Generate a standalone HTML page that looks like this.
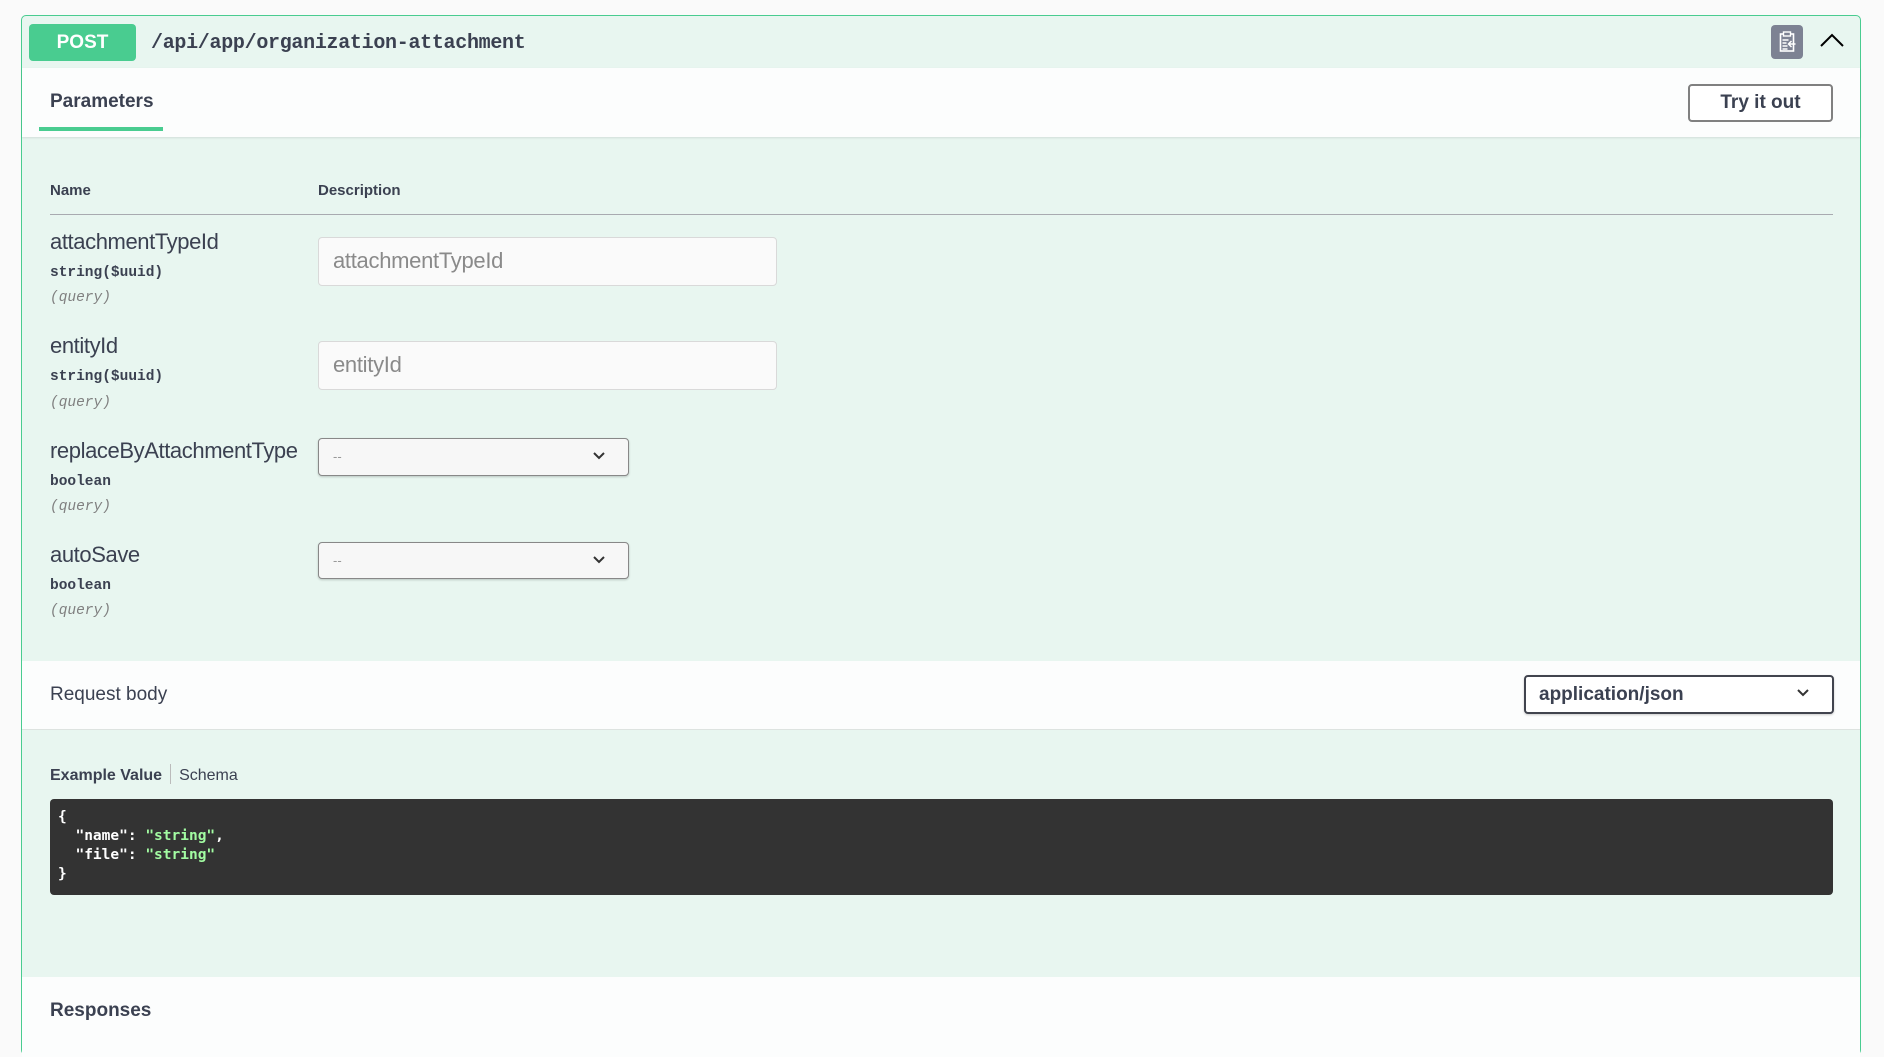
<!DOCTYPE html>
<html><head><style>
body{margin:0;background:#fafafa;font-family:"Liberation Sans",sans-serif;color:#3b4151;width:1884px;height:1037px;overflow:hidden;position:relative}
.box{position:absolute;left:21px;top:15px;width:1840px;height:1040px;border:1px solid #49cc90;border-radius:5px;background:#e8f6f0;box-sizing:border-box}
.a{position:absolute}
.hdr{left:0;top:0;width:100%;height:52px;border-bottom:1px solid #49cc90}
.badge{left:7px;top:8px;width:107px;height:37px;background:#49cc90;border-radius:4px;color:#fff;font-weight:bold;font-size:19px;text-align:center;line-height:37px}
.path{left:129px;top:11px;font-family:"Liberation Mono",monospace;font-size:20px;line-height:34px;color:#3b4151;font-weight:bold;letter-spacing:-0.3px}
.white{left:0;width:100%;background:#fcfdfd}
.lbl{font-size:22px;color:#3b4151;letter-spacing:-0.4px}
.type{font-family:"Liberation Mono",monospace;font-size:14.5px;font-weight:bold}
.q{font-family:"Liberation Mono",monospace;font-size:14.5px;font-style:italic;color:#808080}
.inp{background:#fafafa;border:1px solid #d9d9d9;border-radius:4px;box-sizing:border-box;font-size:22px;color:#8a8a8a;padding-left:14px;line-height:46px;letter-spacing:-0.3px}
.sel{background:#f7f7f7;border:1px solid #888;border-radius:4px;box-sizing:border-box;box-shadow:0 1px 2px rgba(0,0,0,.2);font-size:13px;color:#999;padding-left:14px}
</style></head><body>
<div class="box">
 <div class="a hdr"></div>
 <div class="a badge">POST</div>
 <div class="a path">/api/app/organization-attachment</div>
 <div class="a" style="left:1749px;top:9px;width:32px;height:34px;background:#7d8293;border-radius:4px">
  <svg width="32" height="34" viewBox="0 0 31 34"><rect x="9" y="9" width="13" height="17" fill="none" stroke="#fff" stroke-width="1.6"/><rect x="12" y="7" width="7" height="4" fill="#7d8293" stroke="#fff" stroke-width="1.4"/><path d="M11 15h6M11 18h4M11 21h5M11 24h5M24 19h-6M20 16l-3 3 3 3" stroke="#fff" stroke-width="1.5" fill="none"/></svg>
 </div>
 <svg class="a" style="left:1797px;top:15px" width="26" height="20" viewBox="0 0 26 20"><path d="M2 15L13 4l11 11" stroke="#000" stroke-width="2" fill="none"/></svg>
 <div class="a white" style="top:52px;height:69px;box-shadow:0 1px 2px rgba(0,0,0,.1)"></div>
 <div class="a" style="left:28px;top:75px;font-size:19px;font-weight:bold">Parameters</div>
 <div class="a" style="left:17px;top:111px;width:124px;height:4px;background:#49cc90"></div>
 <div class="a" style="left:1666px;top:68px;width:145px;height:38px;border:2px solid #808080;border-radius:4px;box-sizing:border-box;background:#fff;font-size:19px;font-weight:bold;text-align:center;line-height:34px">Try it out</div>
 <div class="a" style="left:28px;top:166px;font-size:15px;font-weight:bold">Name</div>
 <div class="a" style="left:296px;top:166px;font-size:15px;font-weight:bold">Description</div>
 <div class="a" style="left:28px;top:198px;width:1783px;height:1px;background:#a8aab0"></div>

 <div class="a lbl" style="left:28px;top:213px">attachmentTypeId</div>
 <div class="a type" style="left:28px;top:249px">string($uuid)</div>
 <div class="a q" style="left:28px;top:274px">(query)</div>
 <div class="a inp" style="left:296px;top:221px;width:459px;height:49px">attachmentTypeId</div>

 <div class="a lbl" style="left:28px;top:317px">entityId</div>
 <div class="a type" style="left:28px;top:353px">string($uuid)</div>
 <div class="a q" style="left:28px;top:379px">(query)</div>
 <div class="a inp" style="left:296px;top:325px;width:459px;height:49px">entityId</div>

 <div class="a lbl" style="left:28px;top:422px">replaceByAttachmentType</div>
 <div class="a type" style="left:28px;top:458px">boolean</div>
 <div class="a q" style="left:28px;top:483px">(query)</div>
 <div class="a sel" style="left:296px;top:422px;width:311px;height:38px;line-height:36px">--</div>
 <svg class="a" style="left:570px;top:435px" width="14" height="10"><path d="M2 2l5 5 5-5" stroke="#333" stroke-width="2" fill="none"/></svg>

 <div class="a lbl" style="left:28px;top:526px">autoSave</div>
 <div class="a type" style="left:28px;top:562px">boolean</div>
 <div class="a q" style="left:28px;top:587px">(query)</div>
 <div class="a sel" style="left:296px;top:526px;width:311px;height:37px;line-height:35px">--</div>
 <svg class="a" style="left:570px;top:539px" width="14" height="10"><path d="M2 2l5 5 5-5" stroke="#333" stroke-width="2" fill="none"/></svg>

 <div class="a white" style="top:645px;height:68px;border-bottom:1px solid #dde3e0"></div>
 <div class="a" style="left:28px;top:668px;font-size:19px">Request body</div>
 <div class="a" style="left:1502px;top:659px;width:310px;height:39px;border:2px solid #41444e;border-radius:4px;box-sizing:border-box;background:#fff;font-size:19px;font-weight:bold;padding-left:13px;line-height:35px;box-shadow:0 1px 2px rgba(0,0,0,.2)">application/json</div>
 <svg class="a" style="left:1774px;top:672px" width="14" height="10"><path d="M2 2l5 5 5-5" stroke="#333" stroke-width="2" fill="none"/></svg>

 <div class="a" style="left:28px;top:748px;font-size:16px"><b>Example Value</b><span style="display:inline-block;width:1px;height:20px;background:#bbb;margin:0 8px;vertical-align:-4px"></span>Schema</div>
 <div class="a" style="left:28px;top:783px;width:1783px;height:96px;background:#333;border-radius:4px;font-family:'DejaVu Sans Mono','Liberation Mono',monospace;font-size:14.5px;font-weight:bold;color:#fff;line-height:19px;padding:9px 8px;box-sizing:border-box;white-space:pre">{
  "name": <span style="color:#a2fca2">"string"</span>,
  "file": <span style="color:#a2fca2">"string"</span>
}</div>
 <div class="a white" style="top:961px;height:80px"></div>
 <div class="a" style="left:28px;top:984px;font-size:19px;font-weight:bold">Responses</div>
</div>
</body></html>
